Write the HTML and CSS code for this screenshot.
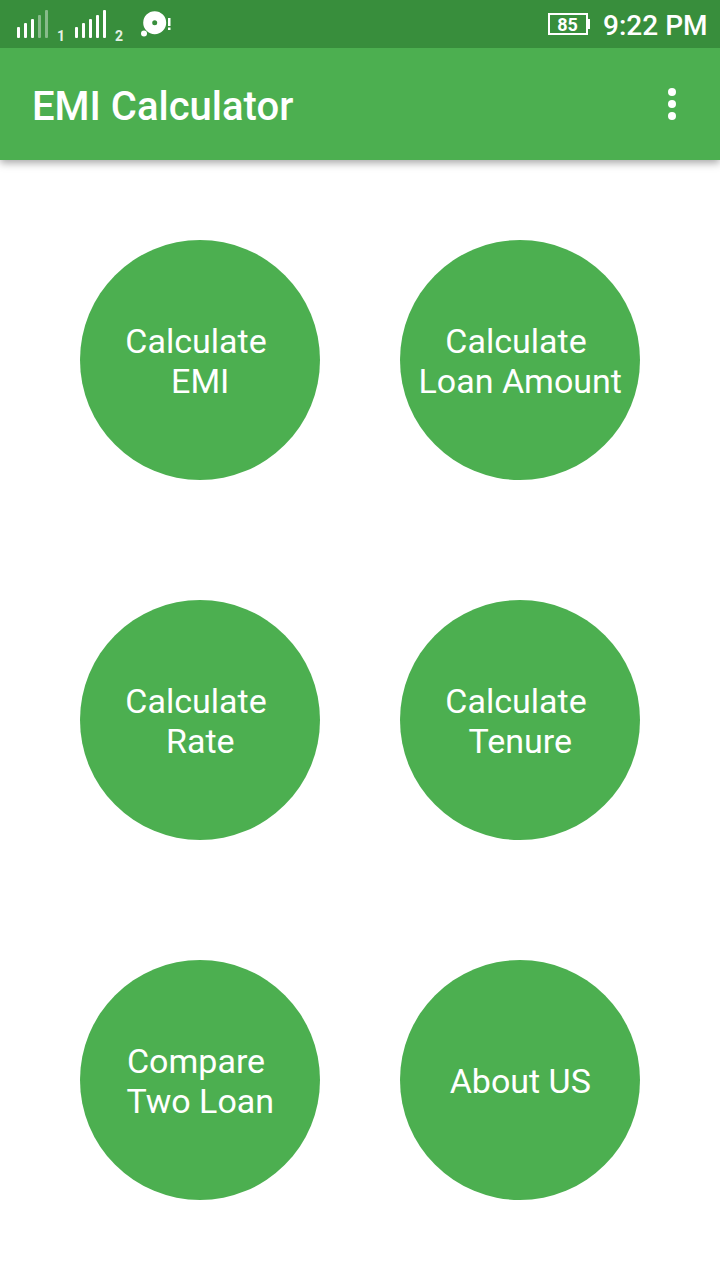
FILE: index.html
```html
<!DOCTYPE html>
<html lang="en">
<head>
<meta charset="utf-8">
<title>EMI Calculator</title>
<link rel="stylesheet" href="styles.css">
</head>
<body>
<div class="status-bar">
  <div class="status-left">
    <svg class="signal" width="32" height="28" viewBox="0 0 32 28" fill="#fff">
      <rect x="0" y="17" width="3" height="11" rx="1"/><rect x="7" y="13" width="3" height="15" rx="1"/><rect x="14" y="9" width="3" height="19" rx="1"/><rect x="21" y="5" width="3" height="23" rx="1" opacity=".4"/><rect x="28" y="0" width="3" height="28" rx="1" opacity=".4"/>
    </svg>
    <span class="sim sim-one">1</span>
    <svg class="signal" width="32" height="28" viewBox="0 0 32 28" fill="#fff">
      <rect x="0" y="17" width="3" height="11" rx="1"/><rect x="7" y="13" width="3" height="15" rx="1"/><rect x="14" y="9" width="3" height="19" rx="1"/><rect x="21" y="5" width="3" height="23" rx="1"/><rect x="28" y="0" width="3" height="28" rx="1"/>
    </svg>
    <span class="sim sim-two">2</span>
    <svg class="notice" width="32" height="28" viewBox="0 0 32 28" fill="#fff">
      <path fill-rule="evenodd" d="M14.7 1.2a11.5 11.5 0 1 0 0 23a11.5 11.5 0 1 0 0-23zM14.7 10.2a2.5 2.5 0 1 1 0 5a2.5 2.5 0 1 1 0-5z"/>
      <circle cx="4" cy="23.5" r="3"/><rect x="28" y="8" width="2.5" height="8"/><rect x="28" y="17.5" width="2.5" height="2.5"/>
    </svg>
  </div>
  <div class="status-right">
    <div class="battery">85</div>
    <span class="clock">9:22 PM</span>
  </div>
</div>
<header class="app-bar">
  <h1 class="title">EMI Calculator</h1>
  <svg class="menu" width="8" height="32" viewBox="0 0 8 32" fill="#fff"><circle cx="4" cy="4" r="4"/><circle cx="4" cy="16" r="4"/><circle cx="4" cy="28" r="4"/></svg>
</header>
<main class="grid">
  <div class="circle"><span class="label">Calculate 
EMI</span></div>
  <div class="circle"><span class="label">Calculate 
Loan Amount</span></div>
  <div class="circle"><span class="label">Calculate 
Rate</span></div>
  <div class="circle"><span class="label">Calculate 
Tenure</span></div>
  <div class="circle"><span class="label">Compare 
Two Loan</span></div>
  <div class="circle"><span class="label">About US</span></div>
</main>
</body>
</html>
```

FILE: styles.css
```css
body {
  margin: 0;
  height: 1280px;
  background: #fff;
  color: #fff;
  font-family: Roboto, "Liberation Sans", sans-serif;
  overflow: hidden;
}
.status-bar {
  position: relative;
  z-index: 1;
  display: flex;
  justify-content: space-between;
  height: 48px;
  background: #388e3c;
}
.status-left, .status-right { display: flex; }
.status-left { padding-left: 17px; }
.signal { margin-top: 10px; }
.sim {
  width: 26px;
  box-sizing: border-box;
  padding: 27px 0 0 8px;
  font-size: 14px;
  font-weight: 700;
  line-height: 18px;
  color: #e4f1e5;
}
.sim-two { width: 33px; }
.notice { margin-top: 10px; }
.status-right { padding-right: 12.5px; }
.battery {
  position: relative;
  display: flex;
  align-items: center;
  justify-content: center;
  box-sizing: border-box;
  width: 40px;
  height: 22px;
  margin: 13px 15.5px 0 0;
  border: 2px solid #fff;
  font-size: 18px;
  font-weight: 700;
}
.battery::after {
  content: "";
  position: absolute;
  right: -4px;
  top: 4px;
  width: 2px;
  height: 10px;
  background: #fff;
}
.clock {
  font-size: 28px;
  font-weight: 500;
  line-height: 52px;
}
.app-bar {
  display: flex;
  justify-content: space-between;
  box-sizing: border-box;
  height: 112px;
  padding: 0 44px 0 32px;
  background: #4caf50;
  box-shadow: 0 3px 8px rgba(0, 0, 0, .35);
}
.title {
  margin: 0;
  font-size: 40px;
  font-weight: 500;
  line-height: 118px;
}
.menu { margin-top: 40px; }
.grid {
  display: grid;
  grid-template-columns: 240px 240px;
  grid-auto-rows: 240px;
  gap: 120px 80px;
  justify-content: center;
  padding-top: 80px;
}
.circle {
  display: flex;
  align-items: center;
  justify-content: center;
  border-radius: 50%;
  background: #4caf50;
}
.label {
  white-space: pre;
  text-align: center;
  font-size: 34px;
  line-height: 40px;
  padding: 2px 0 0 .5px;
}
```
